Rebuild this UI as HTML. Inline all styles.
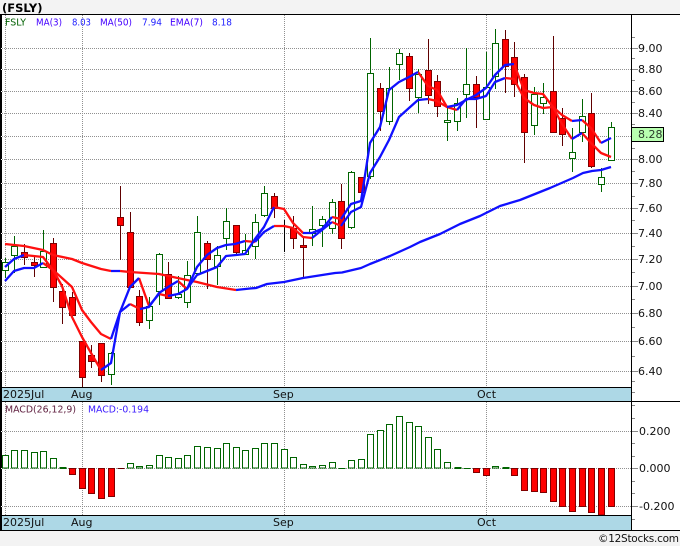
<!DOCTYPE html>
<html><head><meta charset="utf-8"><title>FSLY</title>
<style>
html,body{margin:0;padding:0;background:#f3f3f3}
svg{display:block}
text{font-family:"DejaVu Sans","Liberation Sans",sans-serif;font-size:11px;fill:#111}
.leg text{font-size:9.6px}
.grid{stroke:#909090;stroke-width:1;stroke-dasharray:1 1;fill:none}
.gw{stroke:#006400;fill:none}
.gb{stroke:#006400;fill:#fff}
.rw{stroke:#600000;fill:none}
.rb{stroke:#800000;fill:#f00}
.tick{stroke:#888;fill:none}
</style></head><body>
<svg xmlns="http://www.w3.org/2000/svg" width="680" height="546" viewBox="0 0 680 546">
<rect width="680" height="546" fill="#f3f3f3"/>
<rect x="0" y="14" width="680" height="517" fill="#fff"/>
<text x="2" y="12" style="font-size:11.5px;font-weight:bold;fill:#000">(FSLY)</text>
<g shape-rendering="crispEdges">
<path class="grid" d="M2 48.5H631M2 69.5H631M2 91.5H631M2 113.5H631M2 136.5H631M2 159.5H631M2 183.5H631M2 208.5H631M2 233.5H631M2 259.5H631M2 286.5H631M2 313.5H631M2 341.5H631M2 371.5H631M2 431.5H631M2 468.5H631M2 506.5H631"/>
<path class="grid" d="M5.5 15V387M82.5 15V387M284.5 15V387M486.5 15V387M5.5 402V515M82.5 402V515M284.5 402V515M486.5 402V515"/>
<!-- axis ticks -->
<path class="tick" d="M632 48.5H638M632 69.5H638M632 91.5H638M632 113.5H638M632 159.5H638M632 183.5H638M632 208.5H638M632 233.5H638M632 259.5H638M632 286.5H638M632 313.5H638M632 341.5H638M632 371.5H638M632 431.5H638M632 468.5H638M632 506.5H638"/>
<path class="tick" d="M632 37.5H635M632 58.5H635M632 80.5H635M632 102.5H635M632 124.5H635M632 148.5H635M632 171.5H635M632 196.5H635M632 220.5H635M632 246.5H635M632 272.5H635M632 299.5H635M632 327.5H635M632 356.5H635M632 381.5H635M632 392.5H635M632 405.5H635M632 418.5H635M632 443.5H635M632 456.5H635M632 481.5H635M632 493.5H635M632 519.5H635"/>
<!-- green candles -->
<path class="gw" d="M5.5 258V278M14.5 236V273M43.5 230V268M111.5 352V385M149.5 297V329M159.5 253V305M178.5 276V299M187.5 261V308M197.5 216V273M217.5 246V285M226.5 208V250M245.5 234V255M255.5 214V259M264.5 186V217M312.5 206V246M322.5 216V247M332.5 199V234M351.5 171V229M370.5 38V179M389.5 67V125M399.5 49V80M418.5 69V113M447.5 106V141M457.5 98V131M466.5 48V118M486.5 52V119M495.5 29V89M534.5 87V135M543.5 83V114M572.5 128V172M582.5 99V142M601.5 168V192M611.5 122V160"/>
<path class="gb" d="M2.5 262.5h6V270.5h-6zM11.5 246.5h6V255.5h-6zM40.5 251.5h6V267.5h-6zM108.5 353.5h6V374.5h-6zM146.5 306.5h6V320.5h-6zM156.5 254.5h6V291.5h-6zM175.5 294.5h6V297.5h-6zM184.5 275.5h6V302.5h-6zM194.5 232.5h6V273.5h-6zM214.5 255.5h6V266.5h-6zM223.5 221.5h6V238.5h-6zM242.5 250.5h6V254.5h-6zM252.5 222.5h6V246.5h-6zM261.5 193.5h6V215.5h-6zM309.5 229.5h6V233.5h-6zM319.5 219.5h6V225.5h-6zM329.5 202.5h6V228.5h-6zM348.5 172.5h6V227.5h-6zM367.5 73.5h6V176.5h-6zM386.5 88.5h6V121.5h-6zM396.5 53.5h6V64.5h-6zM415.5 74.5h6V97.5h-6zM444.5 120.5h6V122.5h-6zM454.5 103.5h6V121.5h-6zM463.5 84.5h6V94.5h-6zM483.5 87.5h6V119.5h-6zM492.5 43.5h6V76.5h-6zM531.5 94.5h6V125.5h-6zM540.5 97.5h6V103.5h-6zM569.5 152.5h6V158.5h-6zM579.5 116.5h6V132.5h-6zM598.5 177.5h6V184.5h-6zM608.5 127.5h6V160.5h-6z"/>
<!-- red candles -->
<path class="rw" d="M24.5 244V265M34.5 257V277M53.5 238V302M62.5 284V324M72.5 292V320M82.5 341V387M91.5 345V368M101.5 343V382M120.5 186V260M130.5 212V287M139.5 290V326M168.5 262V299M207.5 241V289M236.5 225V254M274.5 193V218M293.5 216V249M303.5 237V278M341.5 184V249M361.5 177V192M380.5 83V131M409.5 53V101M428.5 39V104M437.5 75V117M476.5 76V128M505.5 30V93M514.5 42V97M524.5 74V163M553.5 36V132M562.5 108V146M591.5 93V168"/>
<path class="rb" d="M21.5 252.5h6V257.5h-6zM31.5 262.5h6V265.5h-6zM50.5 243.5h6V287.5h-6zM59.5 291.5h6V307.5h-6zM69.5 297.5h6V315.5h-6zM79.5 341.5h6V377.5h-6zM88.5 355.5h6V361.5h-6zM98.5 343.5h6V375.5h-6zM117.5 217.5h6V225.5h-6zM127.5 232.5h6V287.5h-6zM136.5 296.5h6V322.5h-6zM165.5 274.5h6V298.5h-6zM204.5 243.5h6V259.5h-6zM233.5 225.5h6V252.5h-6zM271.5 196.5h6V208.5h-6zM290.5 228.5h6V238.5h-6zM300.5 245.5h6V247.5h-6zM338.5 201.5h6V238.5h-6zM358.5 177.5h6V192.5h-6zM377.5 88.5h6V111.5h-6zM406.5 56.5h6V88.5h-6zM425.5 70.5h6V95.5h-6zM434.5 81.5h6V106.5h-6zM473.5 84.5h6V97.5h-6zM502.5 39.5h6V66.5h-6zM511.5 57.5h6V84.5h-6zM521.5 77.5h6V132.5h-6zM550.5 91.5h6V132.5h-6zM559.5 118.5h6V134.5h-6zM588.5 113.5h6V166.5h-6z"/>
<path d="M284.5 220V252" stroke="#000" fill="none"/>
<!-- MACD bars -->
<path class="gb" d="M2.5 455.5h6V468h-6zM11.5 450.5h6V468h-6zM21.5 450.5h6V468h-6zM31.5 452.5h6V468h-6zM40.5 451.5h6V468h-6zM50.5 458.5h6V468h-6zM127.5 463.5h6V468h-6zM136.5 466.5h6V468h-6zM146.5 465.5h6V468h-6zM156.5 455.5h6V468h-6zM165.5 457.5h6V468h-6zM175.5 458.5h6V468h-6zM184.5 455.5h6V468h-6zM194.5 446.5h6V468h-6zM204.5 447.5h6V468h-6zM214.5 448.5h6V468h-6zM223.5 443.5h6V468h-6zM233.5 447.5h6V468h-6zM242.5 450.5h6V468h-6zM252.5 448.5h6V468h-6zM261.5 443.5h6V468h-6zM271.5 443.5h6V468h-6zM281.5 449.5h6V468h-6zM290.5 457.5h6V468h-6zM300.5 464.5h6V468h-6zM309.5 466.5h6V468h-6zM319.5 465.5h6V468h-6zM329.5 462.5h6V468h-6zM348.5 460.5h6V468h-6zM358.5 459.5h6V468h-6zM367.5 434.5h6V468h-6zM377.5 430.5h6V468h-6zM386.5 424.5h6V468h-6zM396.5 416.5h6V468h-6zM406.5 422.5h6V468h-6zM415.5 426.5h6V468h-6zM425.5 437.5h6V468h-6zM434.5 449.5h6V468h-6zM444.5 462.5h6V468h-6zM492.5 466.5h6V468h-6z"/>
<path d="M59.5 467h7v2h-7zM338.5 468h7v1h-7zM454.5 467h7v2h-7zM463.5 468h7v1h-7zM502.5 467h7v2h-7z" fill="#006400"/>
<path class="rb" d="M69.5 468.5h6V474.5h-6zM79.5 468.5h6V488.5h-6zM88.5 468.5h6V493.5h-6zM98.5 468.5h6V498.5h-6zM108.5 468.5h6V496.5h-6zM473.5 468.5h6V472.5h-6zM483.5 468.5h6V475.5h-6zM511.5 468.5h6V475.5h-6zM521.5 468.5h6V490.5h-6zM531.5 468.5h6V491.5h-6zM540.5 468.5h6V492.5h-6zM550.5 468.5h6V501.5h-6zM559.5 468.5h6V506.5h-6zM569.5 468.5h6V511.5h-6zM579.5 468.5h6V506.5h-6zM588.5 468.5h6V512.5h-6zM598.5 468.5h6V515h-6zM608.5 468.5h6V506.5h-6z"/>
<path d="M117.5 468h7v1h-7z" fill="#600000"/>
<!-- bands -->
<rect x="1" y="388" width="630" height="13" fill="#add8e6"/>
<rect x="1" y="516" width="630" height="14" fill="#add8e6"/>
<!-- frame -->
<path d="M0 14.5H680M0 387.5H632M0 401.5H680M0 515.5H632M0 530.5H680M631.5 14V531" stroke="#000" fill="none"/>
<rect x="0" y="14" width="2" height="517" fill="#000"/>
<path d="M1 48.5h1M1 69.5h1M1 91.5h1M1 113.5h1M1 136.5h1M1 159.5h1M1 183.5h1M1 208.5h1M1 233.5h1M1 259.5h1M1 286.5h1M1 313.5h1M1 341.5h1M1 371.5h1M1 431.5h1M1 468.5h1M1 506.5h1" stroke="#fff"/>
</g>
<!-- moving averages -->
<g fill="none" stroke-width="2.3" stroke-linejoin="round">
<path stroke="#ff1010" d="M5 244L24 246L43 250L53 255L72 259L82 263L101 269L111 271M120 271L130 272L159 274L187 280L197 282L217 287L236 290"/>
<path stroke="#ff1010" d="M24 255L43 257L53 270L62 278L72 287L82 310L91 322L101 334L111 339M130 304L140 309M178 281L187 289M274 226L284 226L293 228L303 237L312 238M332 222L341 226M428 99L437 101L447 107L457 110M505 78L514 79L524 98L534 105L543 108L553 107L562 115L572 121M582 120L591 128L601 143"/>
<path stroke="#ff1010" d="M43 263L53 270L62 286L72 317L82 337L91 353L101 370M139 278L149 306M159 294L168 296M245 241L255 242M274 207L284 209L293 223L303 233M332 217L341 219M418 72L428 86L437 90L447 107M514 64L524 90L534 93L543 94L553 107L562 124L572 139M582 133L591 143L601 153L611 157"/>
<path stroke="#1010ff" d="M111 271L120 271M236 290L250 288.5L256 288L267 284L284 282L303 278L335 273L342 272.5L361 268L370 264L390 256L410 247L420 242L440 234L460 224L480 216L500 206L520 200L550 188L573 178L583 173L592 171L601 170L611 167"/>
<path stroke="#1010ff" d="M5 267L14 259L24 255M111 339L120 312L130 304M140 309L149 307L159 293L168 287L178 281M187 289L197 267L207 255L217 248L226 245L235 244L245 241M255 242L264 232L274 226M312 238L322 230L332 222M341 226L351 212L361 207L370 173L380 157L389 140L399 117L409 108L418 100L428 99M457 110L466 99L476 99L486 96L495 82L505 78M572 121L582 120M601 143L611 138"/>
<path stroke="#1010ff" d="M5 281L14 271L24 268L34 268L43 263M101 370L111 363L120 312L130 287L139 278M149 306L159 294M168 296L178 294L187 289L197 275L207 271L217 267L226 256L236 255L245 254L255 239L264 227L274 207M303 233L312 233L322 229L332 217M341 219L351 204L361 201L370 143L380 127L389 90L399 82L409 77L418 72M447 107L457 105L466 100L476 95L486 88L495 75L505 65L514 64M572 139L582 133"/>
</g>
<!-- price box -->
<rect x="631.5" y="127.5" width="32" height="14" fill="#b8ffb0" stroke="#000" shape-rendering="crispEdges"/>
<text x="638" y="138" style="fill:#2a3a2a">8.28</text>
<!-- axis labels -->
<text x="638" y="52">9.00</text>
<text x="638" y="73">8.80</text>
<text x="638" y="95">8.60</text>
<text x="638" y="117">8.40</text>
<text x="638" y="163">8.00</text>
<text x="638" y="187">7.80</text>
<text x="638" y="212">7.60</text>
<text x="638" y="237">7.40</text>
<text x="638" y="263">7.20</text>
<text x="638" y="290">7.00</text>
<text x="638" y="317">6.80</text>
<text x="638" y="345">6.60</text>
<text x="638" y="375">6.40</text>
<text x="639" y="435">0.200</text>
<text x="639" y="472">0.000</text>
<text x="639" y="510">-0.200</text>
<!-- date labels -->
<text x="3" y="398">2025Jul</text>
<text x="71" y="398">Aug</text>
<text x="273" y="398">Sep</text>
<text x="477" y="398">Oct</text>
<text x="3" y="526">2025Jul</text>
<text x="71" y="526">Aug</text>
<text x="273" y="526">Sep</text>
<text x="477" y="526">Oct</text>
<!-- legend -->
<g class="leg">
<text x="5" y="25.5" textLength="21" lengthAdjust="spacingAndGlyphs" style="fill:#006000">FSLY</text>
<text x="36" y="25.5" textLength="26" lengthAdjust="spacingAndGlyphs" style="fill:#4400ff">MA(3)</text>
<text x="72" y="25.5" textLength="19" lengthAdjust="spacingAndGlyphs" style="fill:#2222ff">8.03</text>
<text x="100" y="25.5" textLength="32" lengthAdjust="spacingAndGlyphs" style="fill:#4400ff">MA(50)</text>
<text x="142" y="25.5" textLength="20" lengthAdjust="spacingAndGlyphs" style="fill:#2222ff">7.94</text>
<text x="170" y="25.5" textLength="33" lengthAdjust="spacingAndGlyphs" style="fill:#4400ff">EMA(7)</text>
<text x="212" y="25.5" textLength="20" lengthAdjust="spacingAndGlyphs" style="fill:#2222ff">8.18</text>
<text x="5" y="412.5" textLength="71" lengthAdjust="spacingAndGlyphs" style="fill:#602040">MACD(26,12,9)</text>
<text x="88" y="412.5" textLength="61" lengthAdjust="spacingAndGlyphs" style="fill:#3a1aff">MACD:-0.194</text>
</g>
<text x="598" y="542" textLength="81" style="font-size:10.5px;fill:#111">©12Stocks.com</text>
</svg>
</body></html>
